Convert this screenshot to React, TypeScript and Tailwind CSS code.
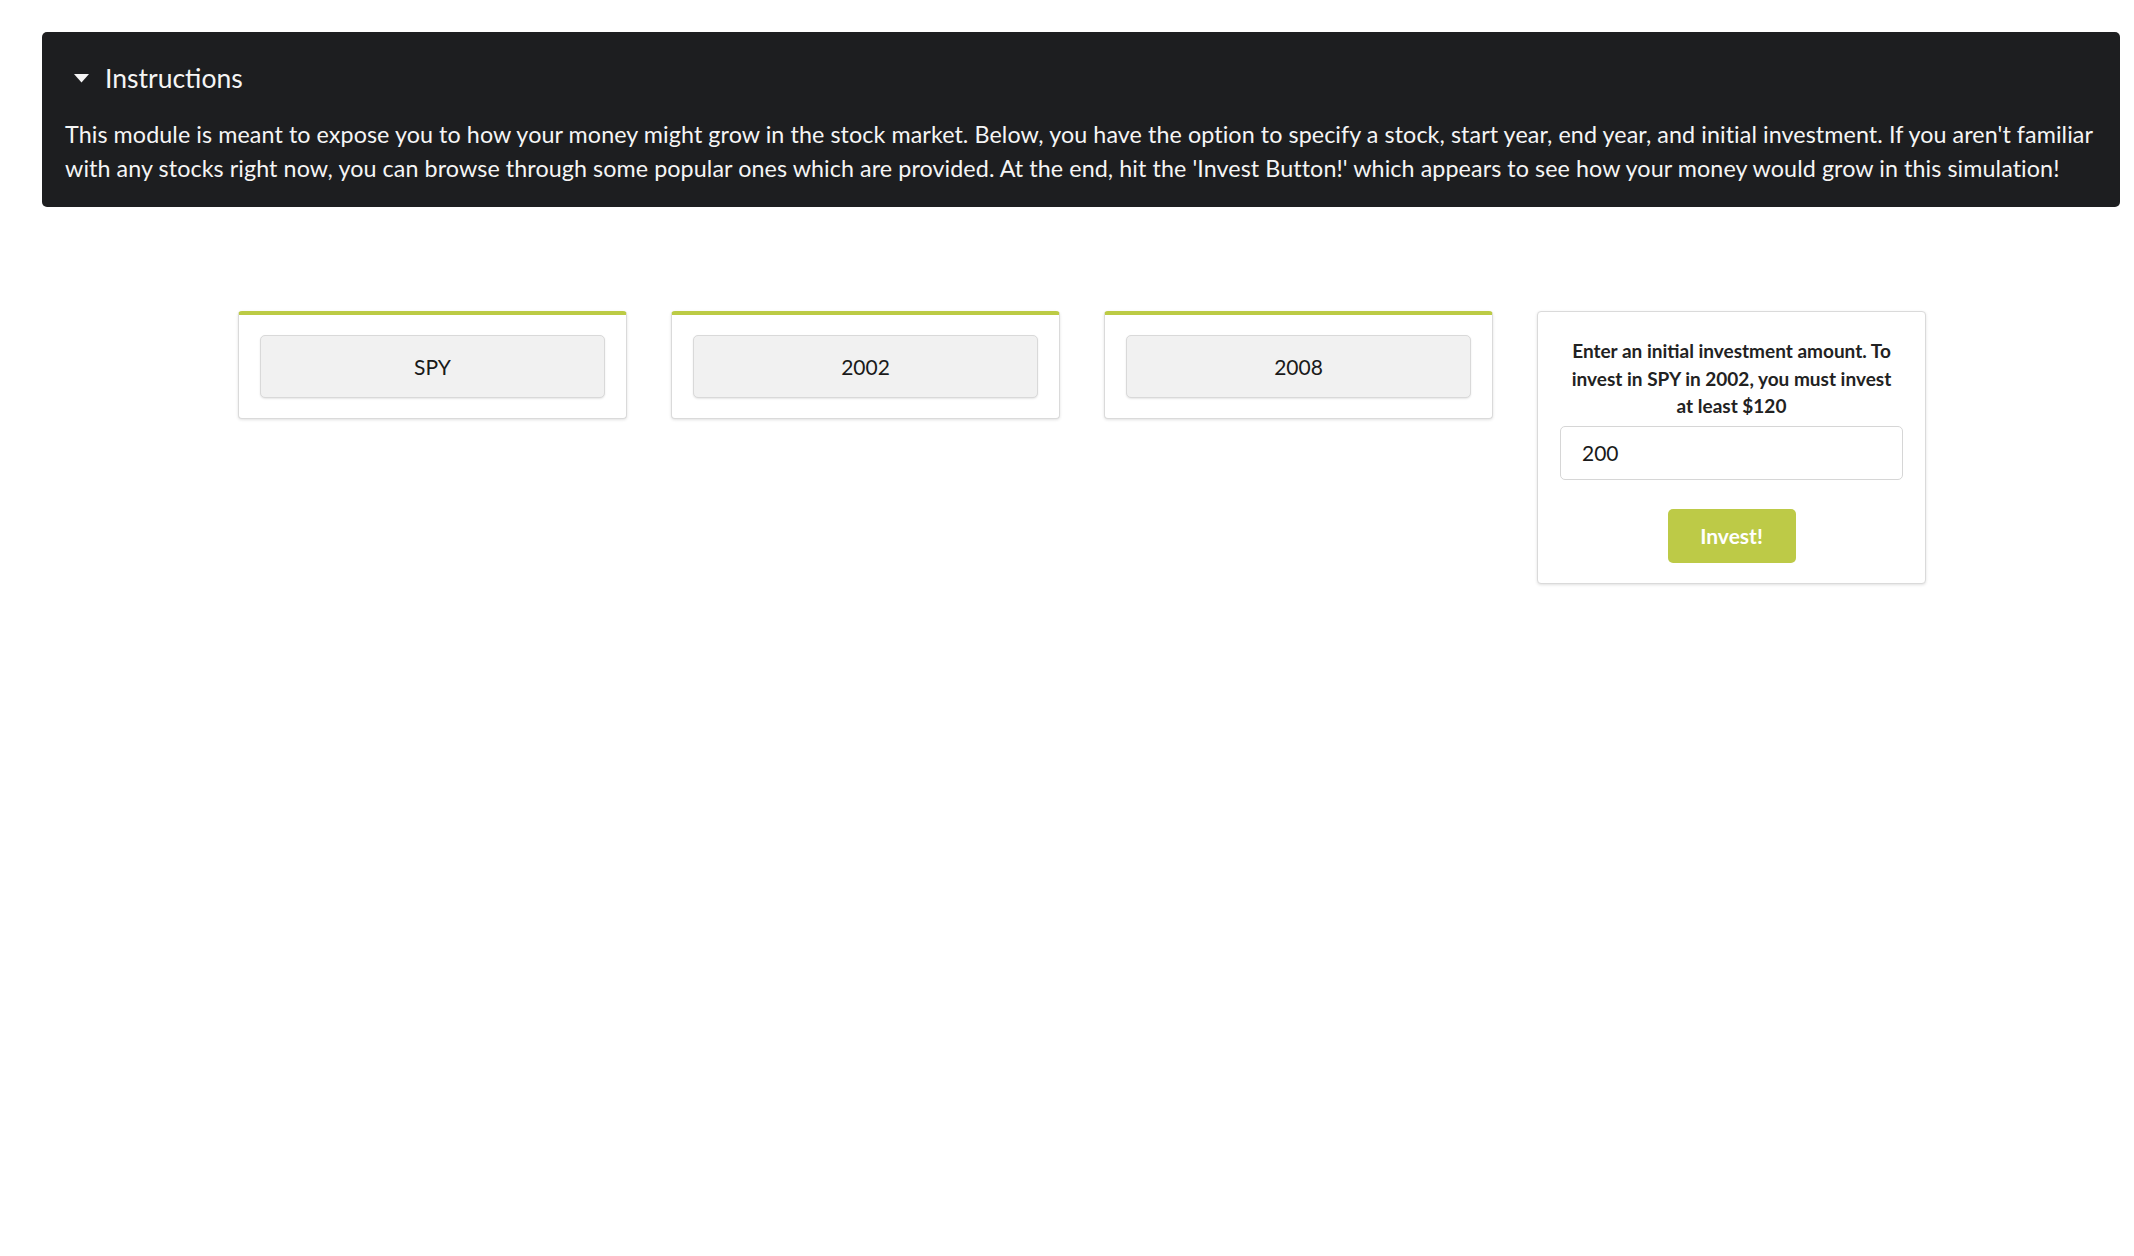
import React from "react";

const font = { fontFamily: "Lato, 'Open Sans', sans-serif" };

function PickCard({ value }: { value: string }) {
  return (
    <div className="w-[389px] bg-white rounded-[4px] border border-[#dadada] border-t-[4px] border-t-[#bccb45] px-[21px] pt-[20px] pb-[20px] shadow-[0_1px_3px_rgba(0,0,0,0.12)]">
      <button className="w-full h-[63px] bg-[#f1f1f1] border border-[#d9d9d9] rounded-[5px] text-[21px] text-[#1a1a1a] shadow-[0_1px_2px_rgba(0,0,0,0.1)]">
        {value}
      </button>
    </div>
  );
}

export default function App() {
  return (
    <div className="min-h-screen bg-white pt-[32px] pl-[42px] pr-[14px]" style={font}>
      <div className="bg-[#1d1e20] rounded-[5px] pl-[23px] pr-[14px] pt-[31px] pb-[22px] text-[#f5f5f5]">
        <div className="flex items-center h-[31px]">
          <svg width="15" height="9" viewBox="0 0 15 9" className="ml-[9px] mr-[16px]">
            <path d="M0 0 L15 0 L7.5 8.5 Z" fill="#f5f5f5" />
          </svg>
          <span className="text-[26.5px] leading-[31px]">Instructions</span>
        </div>
        <p className="mt-[23px] text-[23.3px] leading-[34px] tracking-[0.08px]">
          This module is meant to expose you to how your money might grow in the stock market. Below, you have the option to specify a stock, start year, end year, and initial investment. If you aren't familiar with any stocks right now, you can browse through some popular ones which are provided. At the end, hit the 'Invest Button!' which appears to see how your money would grow in this simulation!
        </p>
      </div>

      <div className="mt-[104px] pl-[196px] flex items-start gap-[44px]">
        <PickCard value="SPY" />
        <PickCard value="2002" />
        <PickCard value="2008" />
        <div className="w-[389px] bg-white rounded-[4px] border border-[#dadada] px-[22px] pt-[25px] pb-[20px] shadow-[0_1px_3px_rgba(0,0,0,0.12)] flex flex-col items-center">
          <p className="px-[5px] text-[19px] leading-[27.5px] font-bold text-[#222] text-center">
            Enter an initial investment amount. To invest in SPY in 2002, you must invest at least $120
          </p>
          <input
            defaultValue="200"
            className="mt-[6px] w-full h-[54px] border border-[#d6d6d6] rounded-[5px] px-[21px] text-[21px] text-[#1a1a1a] outline-none"
          />
          <button className="mt-[29px] w-[128px] h-[54px] bg-[#bdca47] rounded-[5px] text-white text-[21px] font-bold">
            Invest!
          </button>
        </div>
      </div>
    </div>
  );
}
